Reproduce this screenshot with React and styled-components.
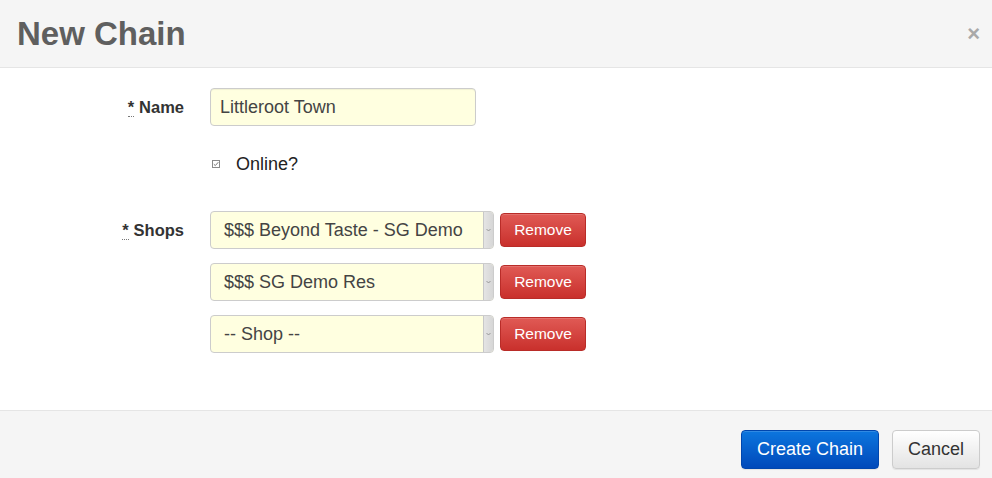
import React from 'react'
import styled, { createGlobalStyle } from 'styled-components'

const GlobalStyle = createGlobalStyle`
  html, body {
    margin: 0;
    padding: 0;
    background: #fff;
  }
  body {
    font-family: "Liberation Sans", Arial, sans-serif;
    color: #333;
  }
`

const Modal = styled.div`
  width: 992px;
  height: 478px;
  overflow: hidden;
  background: #fff;
`

const Header = styled.header`
  height: 67px;
  border-bottom: 1px solid #e5e5e5;
  background: #f5f5f5;
  display: flex;
  align-items: center;
  justify-content: space-between;
  padding: 0 12px 0 17px;
`

const Title = styled.h1`
  margin: 0;
  font-size: 33px;
  font-weight: 700;
  color: #5f5f5f;
`

const Close = styled.span`
  font-size: 22px;
  font-weight: 700;
  color: #a9a9a9;
  line-height: 1;
`

const Body = styled.div`
  height: 342px;
  box-sizing: border-box;
  padding-top: 20px;
  display: grid;
  grid-template-columns: 184px 1fr;
  column-gap: 26px;
  align-content: start;
`

const Label = styled.label`
  justify-self: end;
  align-self: ${(p) => (p.$top ? 'start' : 'center')};
  margin-top: ${(p) => (p.$top ? '10px' : '0')};
  font-size: 16.5px;
  font-weight: 700;
  color: #333;
  white-space: nowrap;
`

const Req = styled.abbr`
  text-decoration: none;
  border-bottom: 1px dotted #777;
  margin-right: 5px;
  line-height: 1;
`

const TextInput = styled.div`
  width: 266px;
  height: 38px;
  box-sizing: border-box;
  border: 1px solid #ccc;
  border-radius: 4px;
  background: #ffffe0;
  box-shadow: inset 0 1px 1px rgba(0, 0, 0, 0.06);
  padding: 0 9px;
  display: flex;
  align-items: center;
  font-size: 18px;
  color: #444;
`

const CheckRow = styled.div`
  grid-column: 2;
  margin-top: 19px;
  height: 38px;
  display: flex;
  align-items: center;
  gap: 16px;
  padding-left: 2px;
  font-size: 18px;
  color: #222;
`

const Spacer = styled.div`
  grid-column: 1 / -1;
  height: 28px;
`

const ShopList = styled.div`
  display: flex;
  flex-direction: column;
  gap: 14px;
`

const ShopRow = styled.div`
  display: flex;
  align-items: center;
  gap: 6px;
`

const Select = styled.div`
  width: 284px;
  height: 38px;
  box-sizing: border-box;
  border: 1px solid #ccc;
  border-radius: 4px;
  background: #ffffe0;
  display: flex;
  overflow: hidden;
`

const SelectText = styled.span`
  flex: 1;
  display: flex;
  align-items: center;
  padding-left: 13px;
  font-size: 18px;
  color: #444;
  white-space: nowrap;
`

const Arrow = styled.span`
  width: 9px;
  border-left: 1px solid #c8c8c8;
  background: linear-gradient(to right, #e4e4e4, #d6d6d6);
  display: flex;
  align-items: center;
  justify-content: center;
`

const RemoveButton = styled.button`
  width: 86px;
  height: 34px;
  border: 1px solid #b92c28;
  border-radius: 4px;
  background: linear-gradient(to bottom, #e05a55 0%, #c9302c 100%);
  color: #fff;
  font-family: inherit;
  font-size: 15.5px;
  padding: 0;
  box-shadow: inset 0 1px 0 rgba(255, 255, 255, 0.15);
`

const Footer = styled.footer`
  border-top: 1px solid #e5e5e5;
  background: #f5f5f5;
  height: 67px;
  display: flex;
  justify-content: flex-end;
  align-items: flex-start;
  gap: 13px;
  padding: 19px 12px 0 0;
`

const Button = styled.button`
  height: 39px;
  padding: 0 15px;
  border-radius: 4px;
  font-family: inherit;
  font-size: 18px;
  border: 1px solid ${(p) => (p.$primary ? '#0046ad' : '#ccc')};
  color: ${(p) => (p.$primary ? '#fff' : '#333')};
  background: ${(p) =>
    p.$primary
      ? 'linear-gradient(to bottom, #0c76de 0%, #0049ba 100%)'
      : 'linear-gradient(to bottom, #ffffff 0%, #e3e3e3 100%)'};
  box-shadow: inset 0 1px 0 rgba(255, 255, 255, 0.15), 0 1px 1px rgba(0, 0, 0, 0.075);
`

const TinyCheck = () => (
  <svg width="8" height="8" viewBox="0 0 8 8">
    <rect x="0.5" y="0.5" width="7" height="7" fill="#fff" stroke="#8a8a8a" />
    <path d="M1.8 4.2 L3.3 5.6 L6.3 2.2" fill="none" stroke="#777" strokeWidth="1" />
  </svg>
)

const Chevron = () => (
  <svg width="5" height="4" viewBox="0 0 5 4">
    <path d="M0.5 1 L2.5 3 L4.5 1" fill="none" stroke="#888" strokeWidth="0.8" />
  </svg>
)

const shops = ['$$$ Beyond Taste - SG Demo', '$$$ SG Demo Res', '-- Shop --']

export default function App() {
  return (
    <Modal>
      <GlobalStyle />
      <Header>
        <Title>New Chain</Title>
        <Close>×</Close>
      </Header>
      <Body>
        <Label>
          <Req title="required">*</Req>Name
        </Label>
        <TextInput>Littleroot Town</TextInput>

        <CheckRow>
          <TinyCheck />
          <span>Online?</span>
        </CheckRow>
        <Spacer />

        <Label $top>
          <Req title="required">*</Req>Shops
        </Label>
        <ShopList>
          {shops.map((s) => (
            <ShopRow key={s}>
              <Select>
                <SelectText>{s}</SelectText>
                <Arrow>
                  <Chevron />
                </Arrow>
              </Select>
              <RemoveButton>Remove</RemoveButton>
            </ShopRow>
          ))}
        </ShopList>
      </Body>
      <Footer>
        <Button $primary>Create Chain</Button>
        <Button>Cancel</Button>
      </Footer>
    </Modal>
  )
}
